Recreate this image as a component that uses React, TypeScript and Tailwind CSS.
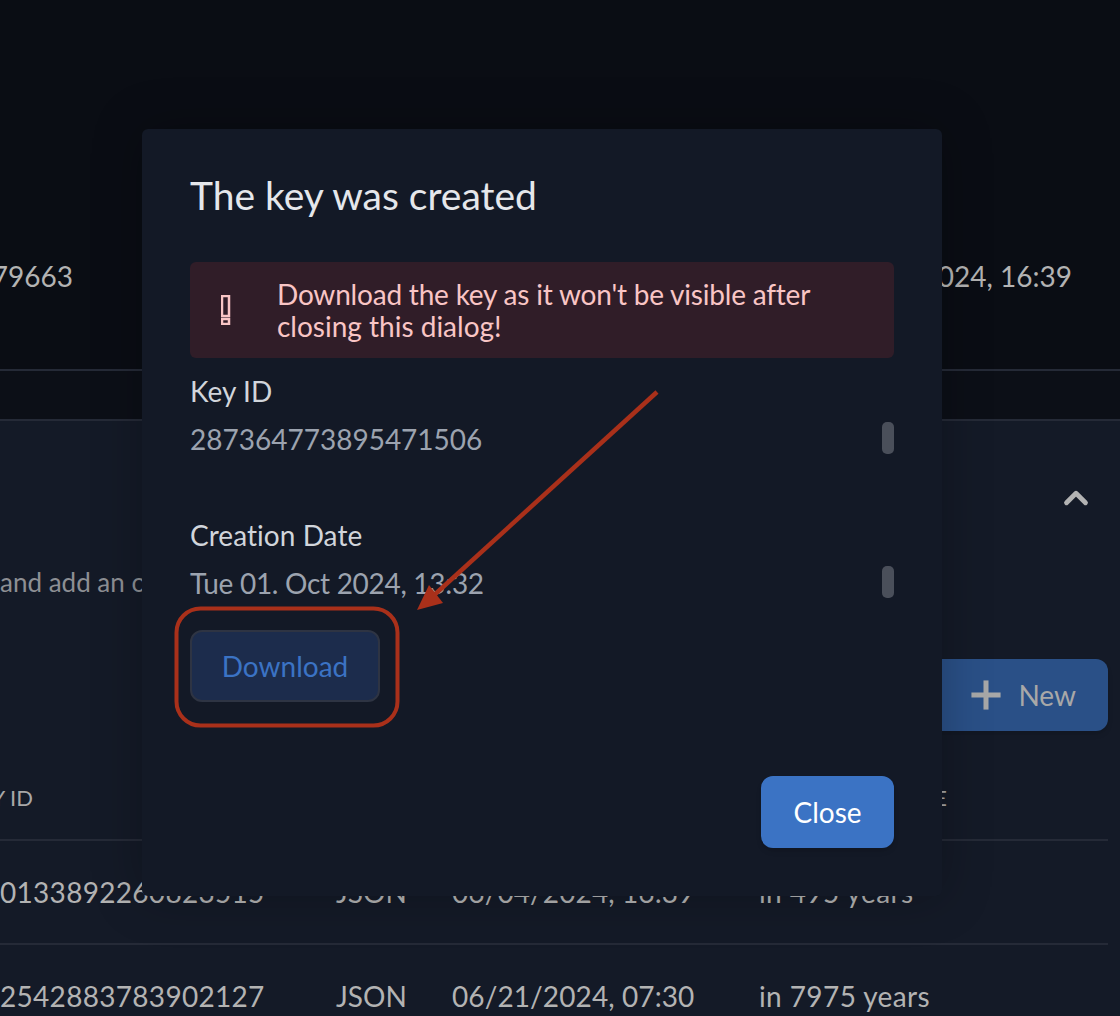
import React from "react";
import { ChevronUp, Plus } from "lucide-react";

const font = "font-['Lato','Noto_Sans',sans-serif]";

function KeyField({ label, value, tight }: { label: string; value: string; tight?: boolean }) {
  return (
    <div className="relative h-[144px] pt-[17px]">
      <p className="text-[28px] leading-[32px] tracking-[0.05px] text-[#d1d5db]">{label}</p>
      <p className={`mt-[16px] text-[28px] leading-[32px] text-[#9ca3af] ${tight ? "tracking-[-0.3px]" : ""}`}>
        {value}
      </p>
      <div className="absolute right-0 top-[64px] h-[32px] w-[12px] rounded-[5px] bg-[#4a4f5a]" />
    </div>
  );
}

function KeyRow({ id, created, expires }: { id: string; created: string; expires: string }) {
  return (
    <div className="grid h-[104px] shrink-0 grid-cols-[336px_116px_307px_1fr] items-center border-t-2 border-[#252a37] text-[28px] text-[#b3b3b3]">
      <div className="whitespace-nowrap tracking-[0.3px]">{id}</div>
      <div>JSON</div>
      <div className="tracking-[0.1px]">{created}</div>
      <div className="tracking-[0.4px]">{expires}</div>
    </div>
  );
}

export default function App() {
  return (
    <div className={`relative flex h-[1016px] w-full flex-col overflow-hidden bg-[#141a27] ${font}`}>
      {/* Background page */}
      <div className="flex h-[369px] shrink-0 items-center justify-between whitespace-nowrap bg-[#0a0d14] pr-[48px] pt-[182px] text-[28px] text-[#b3b3b3]">
        <span className="flex w-[73px] justify-end">1279663</span>
        <span>06/04/2024, 16:39</span>
      </div>
      <div className="h-[52px] shrink-0 border-y-2 border-[#252a37] bg-[#0c0f17]" />

      <div className="flex flex-1 flex-col pr-[12px]">
        <div className="flex justify-end pt-[58px]">
          <ChevronUp size={38} strokeWidth={3} className="mr-[13px] text-[#b3b3b3]" />
        </div>
        <p className="mt-[49px] whitespace-nowrap text-[26px] leading-[32px] text-[#8d8f94]">
          and add an other key to this service
        </p>
        <div className="mt-[61px] flex shrink-0 justify-end">
          <div className="flex h-[72px] w-[200px] items-center justify-end gap-[7px] rounded-[12px] bg-[#2a5087] pr-[32px] text-[28px] text-[#a8a8a8] shadow-md">
            <Plus size={50} strokeWidth={2.4} strokeLinecap="butt" />
            New
          </div>
        </div>
        <div className="grid h-[108px] shrink-0 grid-cols-[336px_116px_307px_1fr] items-center pt-[24px] text-[22px] uppercase text-[#a8a8a8]">
          <div className="flex w-[33px] justify-end whitespace-nowrap">Key ID</div>
          <div>Type</div>
          <div>Created</div>
          <div className="whitespace-nowrap">Expiration Date</div>
        </div>
        <KeyRow id="0133892260823515" created="06/04/2024, 16:39" expires="in 495 years" />
        <KeyRow id="2542883783902127" created="06/21/2024, 07:30" expires="in 7975 years" />
      </div>

      {/* Dialog */}
      <div className="absolute left-[142px] top-[129px] flex h-[767px] w-[800px] flex-col rounded-[6px] bg-[#131926] px-[48px] pt-[42px] shadow-[0_0_50px_rgba(0,0,0,0.25)]">
        <h2 className="text-[39px] leading-[48px] text-[#e5e7eb]">The key was created</h2>
        <div className="mt-[43px] flex h-[96px] items-center rounded-[6px] bg-[#301d28] pl-[31px] pr-[48px]">
          <svg width="10" height="30" viewBox="0 0 10 30" fill="none" className="mr-[46px] shrink-0">
            <rect x="1" y="1" width="7" height="20" stroke="#f9c5c5" strokeWidth="2.5" />
            <rect x="1" y="24" width="7" height="5" stroke="#f9c5c5" strokeWidth="2.5" />
          </svg>
          <p className="text-[28px] leading-[32px] text-[#f9c5c5]">
            <span className="tracking-[-0.2px]">Download the key as it won't be visible after</span>
            <br />
            closing this dialog!
          </p>
        </div>
        <KeyField label="Key ID" value="287364773895471506" />
        <KeyField label="Creation Date" value="Tue 01. Oct 2024, 13:32" tight />
        <button className="mt-[-16px] h-[72px] w-[190px] rounded-[12px] border-2 border-[#2e3443] bg-[#1c2c4c] text-[28px] text-[#3b73c4]">
          Download
        </button>
        <div className="mt-[74px] flex justify-end">
          <button className="h-[72px] w-[133px] rounded-[12px] bg-[#3b73c4] text-[28px] text-white shadow-md">
            Close
          </button>
        </div>
      </div>

      {/* Red annotation */}
      <svg className="absolute left-0 top-0" width="1120" height="1016" fill="none">
        <rect x="176.5" y="608.5" width="221" height="117" rx="24" stroke="#a9301a" strokeWidth="4" />
        <line x1="657" y1="392" x2="432" y2="597" stroke="#a9301a" strokeWidth="4.5" />
        <polygon points="417,610 429,585 443,603" fill="#a9301a" />
      </svg>
    </div>
  );
}
